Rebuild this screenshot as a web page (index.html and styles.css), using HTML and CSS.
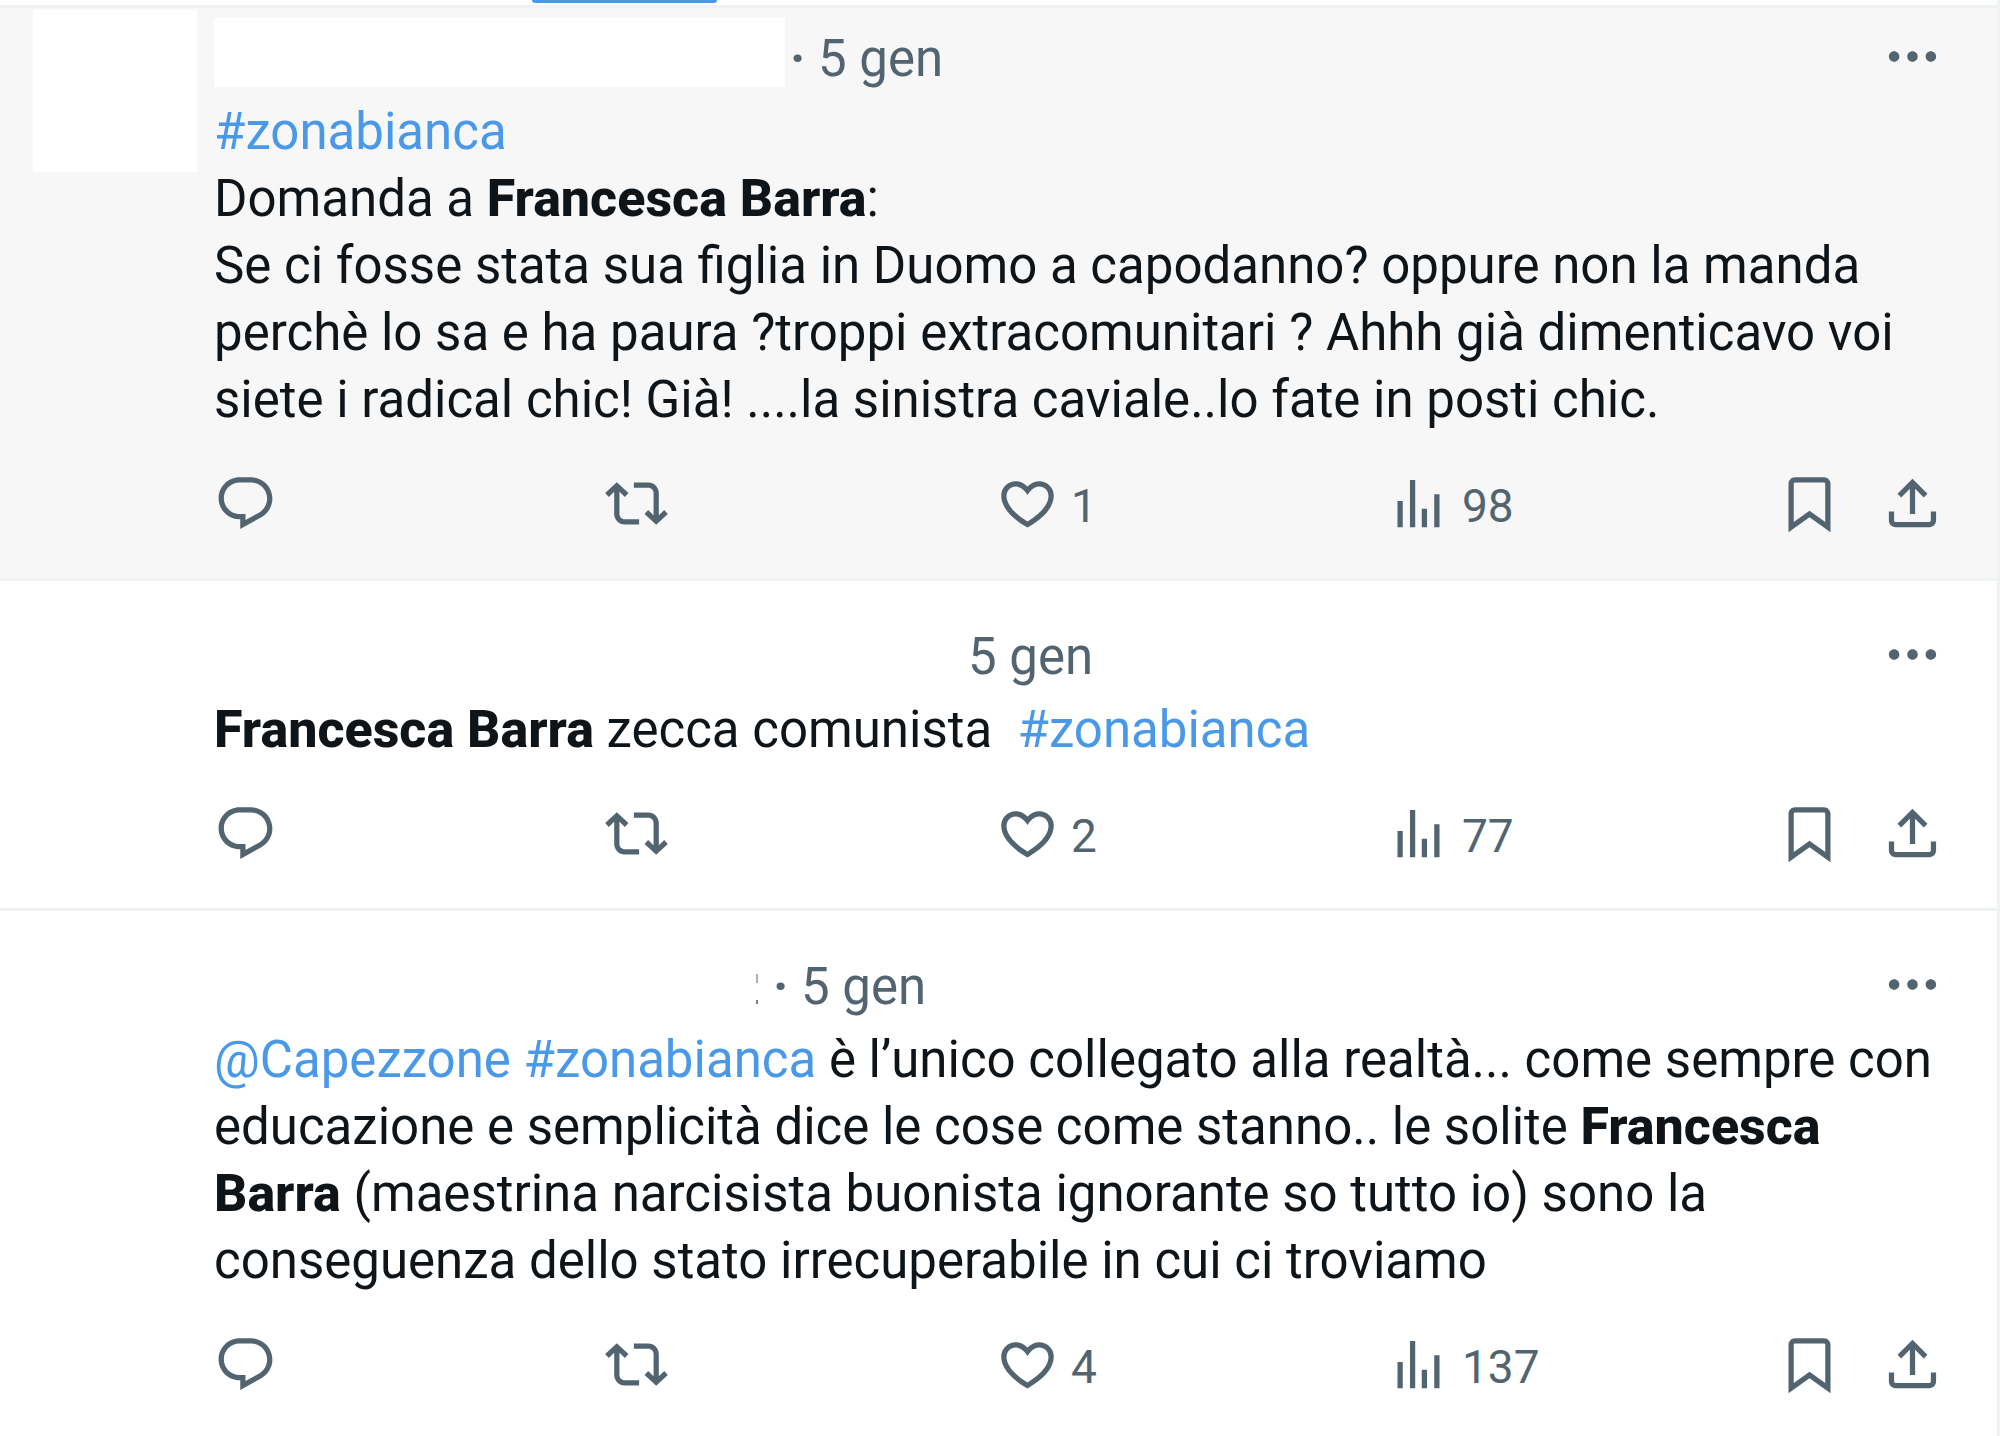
FILE: index.html
```
<!DOCTYPE html>
<html lang="it">
<head>
<meta charset="utf-8">
<title>Zona Bianca</title>
<link rel="stylesheet" href="styles.css">
</head>
<body>
<svg class="sprite" aria-hidden="true">
  <symbol id="reply" viewBox="0 0 24 24"><path d="M1.751 10c0-4.42 3.584-8 8.005-8h4.366c4.49 0 8.129 3.64 8.129 8.13 0 2.96-1.607 5.68-4.196 7.11l-8.054 4.46v-3.69h-.067c-4.49.1-8.183-3.51-8.183-8.01zm8.005-6c-3.317 0-6.005 2.69-6.005 6 0 3.37 2.77 6.08 6.138 6.01l.351-.01h1.761v2.3l5.087-2.81c1.951-1.08 3.163-3.13 3.163-5.36 0-3.39-2.744-6.13-6.129-6.13H9.756z"/></symbol>
  <symbol id="repost" viewBox="0 0 24 24"><path d="M4.5 3.88l4.432 4.14-1.364 1.46L5.5 7.55V16c0 1.1.896 2 2 2H13v2H7.5c-2.209 0-4-1.79-4-4V7.55L1.432 9.48.068 8.02 4.5 3.88zM16.5 6H11V4h5.5c2.209 0 4 1.79 4 4v8.45l2.068-1.93 1.364 1.46-4.432 4.14-4.432-4.14 1.364-1.46 2.068 1.93V8c0-1.1-.896-2-2-2z"/></symbol>
  <symbol id="like" viewBox="0 0 24 24"><path d="M16.697 5.5c-1.222-.06-2.679.51-3.89 2.16l-.805 1.09-.806-1.09C9.984 6.01 8.526 5.44 7.304 5.5c-1.243.07-2.349.78-2.91 1.91-.552 1.12-.633 2.78.479 4.82 1.074 1.97 3.257 4.27 7.129 6.61 3.87-2.34 6.052-4.64 7.126-6.61 1.111-2.04 1.03-3.7.477-4.82-.561-1.13-1.666-1.84-2.908-1.91zm4.187 7.69c-1.351 2.48-4.001 5.12-8.379 7.67l-.503.3-.504-.3c-4.379-2.55-7.029-5.19-8.382-7.67-1.36-2.5-1.41-4.86-.514-6.67.887-1.79 2.647-2.91 4.601-3.01 1.651-.09 3.368.56 4.798 2.01 1.429-1.45 3.146-2.1 4.796-2.01 1.954.1 3.714 1.22 4.601 3.01.896 1.81.846 4.17-.514 6.67z"/></symbol>
  <symbol id="views" viewBox="0 0 24 24"><path d="M8.75 21V3h2v18h-2zM18 21V8.5h2V21h-2zM4 21l.004-10h2L6 21H4zm9.248 0v-7h2v7h-2z"/></symbol>
  <symbol id="bookmark" viewBox="0 0 24 24"><path d="M4 4.5C4 3.12 5.119 2 6.5 2h11C18.881 2 20 3.12 20 4.5v18.44l-8-5.71-8 5.71V4.5zM6.5 4c-.276 0-.5.22-.5.5v14.56l6-4.29 6 4.29V4.5c0-.28-.224-.5-.5-.5h-11z"/></symbol>
  <symbol id="share" viewBox="0 0 24 24"><path d="M12 2.59l5.7 5.7-1.41 1.42L13 6.41V16h-2V6.41l-3.3 3.3-1.41-1.42L12 2.59zM21 15l-.02 3.51c0 1.38-1.12 2.49-2.5 2.49H5.5C4.11 21 3 19.88 3 18.5V15h2v3.5c0 .28.22.5.5.5h12.98c.28 0 .5-.22.5-.5L19 15h2z"/></symbol>
  <symbol id="more" viewBox="0 0 24 24"><path d="M3 12c0-1.1.9-2 2-2s2 .9 2 2-.9 2-2 2-2-.9-2-2zm9 2c1.1 0 2-.9 2-2s-.9-2-2-2-2 .9-2 2 .9 2 2 2zm7 0c1.1 0 2-.9 2-2s-.9-2-2-2-2 .9-2 2 .9 2 2 2z"/></symbol>
</svg>
<main class="timeline">
  <nav class="tabs"><span class="tab-active"></span></nav>

  <article class="post post-hover">
    <div class="avatar avatar-blank"></div>
    <div class="content">
      <header class="head">
        <span class="author author-blank"></span>
        <span class="dot">·</span>
        <time class="date">5 gen</time>
        <button class="more" aria-label="Altro"><svg class="icon"><use href="#more"/></svg></button>
      </header>
      <p class="text"><a href="#zonabianca">#zonabianca</a><br>Domanda a <b>Francesca Barra</b>:<br>Se ci fosse stata sua figlia in Duomo a capodanno? oppure non la manda<br>perchè lo sa e ha paura ?troppi extracomunitari ? Ahhh già dimenticavo voi<br>siete i radical chic! Già! ....la sinistra caviale..lo fate in posti chic.</p>
      <footer class="actions">
        <button class="action" aria-label="Rispondi"><svg class="icon"><use href="#reply"/></svg></button>
        <button class="action" aria-label="Repost"><svg class="icon"><use href="#repost"/></svg></button>
        <button class="action" aria-label="Mi piace"><svg class="icon"><use href="#like"/></svg><span class="count">1</span></button>
        <button class="action" aria-label="Visualizzazioni"><svg class="icon"><use href="#views"/></svg><span class="count">98</span></button>
        <div class="tools">
          <button aria-label="Segnalibro"><svg class="icon"><use href="#bookmark"/></svg></button>
          <button aria-label="Condividi"><svg class="icon"><use href="#share"/></svg></button>
        </div>
      </footer>
    </div>
  </article>

  <article class="post">
    <div class="avatar"></div>
    <div class="content">
      <header class="head">
        <span class="author author-long"></span>
        <time class="date">5 gen</time>
        <button class="more" aria-label="Altro"><svg class="icon"><use href="#more"/></svg></button>
      </header>
      <p class="text"><b>Francesca Barra</b> zecca comunista &nbsp;<a href="#zonabianca">#zonabianca</a></p>
      <footer class="actions">
        <button class="action" aria-label="Rispondi"><svg class="icon"><use href="#reply"/></svg></button>
        <button class="action" aria-label="Repost"><svg class="icon"><use href="#repost"/></svg></button>
        <button class="action" aria-label="Mi piace"><svg class="icon"><use href="#like"/></svg><span class="count">2</span></button>
        <button class="action" aria-label="Visualizzazioni"><svg class="icon"><use href="#views"/></svg><span class="count">77</span></button>
        <div class="tools">
          <button aria-label="Segnalibro"><svg class="icon"><use href="#bookmark"/></svg></button>
          <button aria-label="Condividi"><svg class="icon"><use href="#share"/></svg></button>
        </div>
      </footer>
    </div>
  </article>

  <article class="post">
    <div class="avatar"></div>
    <div class="content">
      <header class="head">
        <span class="author author-short"><span class="author-end"></span></span>
        <span class="dot">·</span>
        <time class="date">5 gen</time>
        <button class="more" aria-label="Altro"><svg class="icon"><use href="#more"/></svg></button>
      </header>
      <p class="text"><a href="#capezzone">@Capezzone</a> <a href="#zonabianca">#zonabianca</a> è l’unico collegato alla realtà... come sempre con<br>educazione e semplicità dice le cose come stanno.. le solite <b>Francesca<br>Barra</b> (maestrina narcisista buonista ignorante so tutto io) sono la<br>conseguenza dello stato irrecuperabile in cui ci troviamo</p>
      <footer class="actions">
        <button class="action" aria-label="Rispondi"><svg class="icon"><use href="#reply"/></svg></button>
        <button class="action" aria-label="Repost"><svg class="icon"><use href="#repost"/></svg></button>
        <button class="action" aria-label="Mi piace"><svg class="icon"><use href="#like"/></svg><span class="count">4</span></button>
        <button class="action" aria-label="Visualizzazioni"><svg class="icon"><use href="#views"/></svg><span class="count">137</span></button>
        <div class="tools">
          <button aria-label="Segnalibro"><svg class="icon"><use href="#bookmark"/></svg></button>
          <button aria-label="Condividi"><svg class="icon"><use href="#share"/></svg></button>
        </div>
      </footer>
    </div>
  </article>
</main>
</body>
</html>
```
FILE: styles.css
```
* { box-sizing: border-box; }

body {
  margin: 0;
  background: #fff;
  color: #0f1419;
  font-family: Roboto, "Liberation Sans", sans-serif;
  font-size: 51px;
  line-height: 67px;
}

.sprite { display: none; }

.timeline {
  min-height: 100vh;
  border-right: 3px solid #eff3f4;
}

.tabs {
  display: flex;
  height: 8px;
  padding-left: 532px;
  border-bottom: 3px solid #eff3f4;
}

.tab-active {
  width: 185px;
  height: 3px;
  border-radius: 0 0 3px 3px;
  background: #4a99e9;
}

.post {
  display: flex;
  gap: 17px;
  padding: 35px 53px 43px 33px;
  border-bottom: 3px solid #eff3f4;
}

.post:last-child { border-bottom: 0; }

.post-hover {
  padding-top: 2px;
  background: #f7f7f7;
}

.post-hover .content { padding-top: 8px; }

.avatar {
  flex: none;
  width: 164px;
  height: 162px;
}

.avatar-blank,
.author-blank { background: #fff; }

.content {
  flex: 1;
  min-width: 0;
}

.head {
  display: flex;
  align-items: flex-end;
  height: 74px;
  margin-bottom: 6px;
  color: #536471;
}

.author {
  flex: none;
  align-self: flex-start;
  width: 571px;
  height: 69px;
}

.author-long { width: 754px; }

.author-short {
  display: flex;
  justify-content: flex-end;
  width: 554px;
}

/* last sliver of the hidden handle */
.author-end {
  width: 2px;
  height: 30px;
  margin: 28px 10px 0 0;
  background: linear-gradient(#a9b1b8 9px, transparent 9px 26px, #758390 26px);
}

.dot {
  width: 33px;
  padding-left: 5px;
  font-weight: 700;
}

button {
  display: flex;
  padding: 0;
  border: 0;
  background: none;
  color: #536471;
  font: inherit;
}

.icon {
  display: block;
  flex: none;
  width: 63px;
  height: 63px;
  fill: currentColor;
}

.more {
  align-self: flex-start;
  margin: 7px 0 0 auto;
}

.text {
  margin: 0;
  white-space: nowrap;
}

.text b {
  font-size: 52px;
  font-weight: 800;
  line-height: 1;
}

a {
  color: #4a99e9;
  text-decoration: none;
}

.actions {
  display: flex;
  margin-top: 39px;
}

.action {
  flex: 1;
  align-items: center;
  gap: 12px;
  height: 63px;
}

.count {
  padding-top: 6px;
  font-size: 46px;
}

.tools {
  display: flex;
  gap: 40px;
}
```
